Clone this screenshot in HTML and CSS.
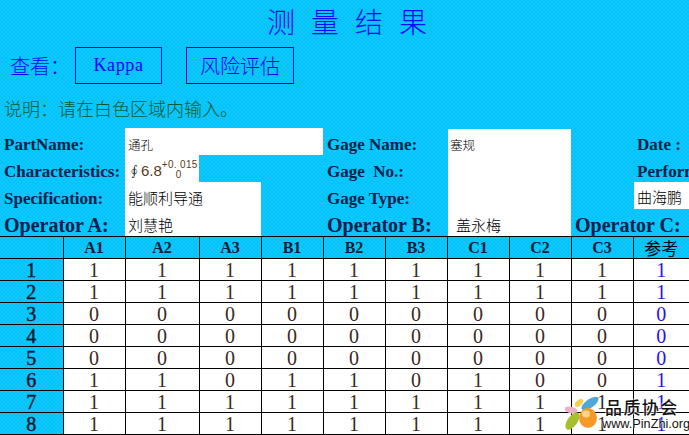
FILE: index.html
```html
<!DOCTYPE html>
<html lang="zh">
<head>
<meta charset="utf-8">
<title>测量结果</title>
<link rel="stylesheet" href="styles.css">
</head>
<body>
<div class="page">
  <h1 class="title">测量结果</h1>
  <div class="nav">
    <span class="nav-label">查看&#65306;</span>
    <a class="nav-btn kappa">Kappa</a>
    <a class="nav-btn risk">风险评估</a>
  </div>
  <p class="note">说明&#65306;请在白色区域内输入。</p>
  <div class="form">
    <div class="lbl">PartName:</div>
    <div class="val w-part">通孔</div>
    <div class="lbl gage-lbl">Gage Name:</div>
    <div class="gage-vals">
      <div class="val-small">塞规</div>
      <div></div>
      <div></div>
      <div class="val-op">盖永梅</div>
    </div>
    <div class="lbl date-lbl">Date :</div>

    <div class="lbl">Characteristics:</div>
    <div class="val w-char"><span class="phi">∮</span><span class="num">6.8</span><span class="tol"><sup>+0. 015</sup><sub>0</sub></span></div>
    <div class="lbl gage-lbl">Gage&nbsp; No.:</div>
    <div class="lbl date-lbl">Perform</div>

    <div class="lbl">Specification:</div>
    <div class="val w-spec">能顺利导通</div>
    <div class="lbl gage-lbl">Gage Type:</div>
    <div class="val w-perf">曲海鹏</div>

    <div class="lbl op">Operator A:</div>
    <div class="val w-spec">刘慧艳</div>
    <div class="lbl op gage-lbl">Operator B:</div>
    <div class="lbl op op-c">Operator C:</div>
  </div>
  <table class="grid">
    <colgroup><col class="c0"><col class="c1"><col class="c2"><col class="c1"><col class="c1"><col class="c1"><col class="c1"><col class="c1"><col class="c1"><col class="c1"><col class="c3"></colgroup>
    <thead>
      <tr><th></th><th>A1</th><th>A2</th><th>A3</th><th>B1</th><th>B2</th><th>B3</th><th>C1</th><th>C2</th><th>C3</th><th class="ref-h">参考</th></tr>
    </thead>
    <tbody>
      <tr><th>1</th><td>1</td><td>1</td><td>1</td><td>1</td><td>1</td><td>1</td><td>1</td><td>1</td><td>1</td><td class="ref">1</td></tr>
      <tr><th>2</th><td>1</td><td>1</td><td>1</td><td>1</td><td>1</td><td>1</td><td>1</td><td>1</td><td>1</td><td class="ref">1</td></tr>
      <tr><th>3</th><td>0</td><td>0</td><td>0</td><td>0</td><td>0</td><td>0</td><td>0</td><td>0</td><td>0</td><td class="ref">0</td></tr>
      <tr><th>4</th><td>0</td><td>0</td><td>0</td><td>0</td><td>0</td><td>0</td><td>0</td><td>0</td><td>0</td><td class="ref">0</td></tr>
      <tr><th>5</th><td>0</td><td>0</td><td>0</td><td>0</td><td>0</td><td>0</td><td>0</td><td>0</td><td>0</td><td class="ref">0</td></tr>
      <tr><th>6</th><td>1</td><td>1</td><td>0</td><td>1</td><td>1</td><td>0</td><td>1</td><td>0</td><td>0</td><td class="ref">1</td></tr>
      <tr><th>7</th><td>1</td><td>1</td><td>1</td><td>1</td><td>1</td><td>1</td><td>1</td><td>1</td><td>1</td><td class="ref">1</td></tr>
      <tr><th>8</th><td>1</td><td>1</td><td>1</td><td>1</td><td>1</td><td>1</td><td>1</td><td>1</td><td>1</td><td class="ref">1</td></tr>
    </tbody>
  </table>
  <div class="logo">
    <svg class="logo-mark" width="37" height="34" viewBox="0 0 37 34">
      <ellipse cx="25" cy="6.5" rx="10" ry="4.2" transform="rotate(-35 25 6.5)" fill="#4fa9d8"/>
      <ellipse cx="14" cy="6" rx="5" ry="3" transform="rotate(-40 14 6)" fill="#f2d24a"/>
      <ellipse cx="6" cy="13" rx="6.5" ry="3.4" transform="rotate(10 6 13)" fill="#eeb0c8"/>
      <ellipse cx="23" cy="21" rx="9" ry="10" fill="#f59a28"/>
      <ellipse cx="21" cy="17" rx="4" ry="3.5" fill="#fbd58a"/>
      <ellipse cx="7.5" cy="24" rx="10" ry="5" transform="rotate(-55 7.5 24)" fill="#a6bf2c"/>
    </svg>
    <div class="logo-text">
      <div class="logo-cn">品质协会</div>
      <div class="logo-url">www.PinZhi.org</div>
    </div>
  </div>
</div>
</body>
</html>
```
FILE: styles.css
```css
html, body {
  margin: 0;
  padding: 0;
  width: 689px;
  height: 435px;
  overflow: hidden;
}
.page {
  position: relative;
  width: 689px;
  height: 435px;
  overflow: hidden;
  background-color: #06ccff;
  background-image:
    radial-gradient(circle, #12b6f2 0.6px, transparent 0.9px),
    radial-gradient(circle, #12b6f2 0.6px, transparent 0.9px);
  background-size: 4px 4px;
  background-position: 0 0, 2px 2px;
  font-family: "Liberation Serif", "Noto Sans CJK SC", serif;
  text-spacing-trim: space-all;
}
.title {
  margin: 0;
  height: 42px;
  line-height: 42px;
  padding-left: 267px;
  font-size: 28px;
  letter-spacing: 16px;
  color: #0a0aff;
  font-family: "Noto Sans CJK SC", sans-serif;
  font-weight: 300;
}
.nav {
  display: flex;
  align-items: center;
  height: 36px;
  margin-top: 5px;
  padding-left: 10px;
  color: #0000ff;
  font-size: 20px;
}
.nav-label {
  width: 65px;
  font-family: "Noto Sans CJK SC", sans-serif;
  font-weight: 300;
}
.nav-btn {
  box-sizing: border-box;
  height: 37px;
  border: 1px solid #0000e0;
  display: flex;
  align-items: center;
  justify-content: center;
}
.kappa { width: 87px; margin-right: 24px; font-size: 18px; letter-spacing: 0.6px; }
.risk { width: 108px; font-family: "Noto Sans CJK SC", sans-serif; font-weight: 300; }
.note {
  margin: 13px 0 8px;
  padding-left: 4px;
  height: 24px;
  line-height: 24px;
  font-size: 18px;
  color: #005a2c;
  font-family: "Noto Sans CJK SC", sans-serif;
  font-weight: 300;
}
.form {
  display: grid;
  grid-template-columns: 125px 74px 62px 62px 124px 124px 62px 56px;
  grid-template-rows: repeat(4, 27px);
  height: 108px;
  white-space: nowrap;
  color: #00204a;
}
.lbl {
  grid-column: 1;
  padding-left: 4px;
  font-size: 17px;
  font-weight: bold;
  line-height: 33px;
}
.gage-lbl { grid-column: 5; }
.date-lbl { grid-column: 8; }
.op { font-size: 20px; line-height: 33px; }
.op-c { grid-column: 7; grid-row: 4; }
.val, .val-small, .val-op {
  background: #fff;
  color: #000;
  font-family: "Noto Sans CJK SC", sans-serif;
  font-weight: 300;
  font-size: 15px;
  line-height: 31px;
  padding-left: 3px;
}
.w-part { grid-column: 2 / 5; font-size: 12.5px; line-height: 34px; }
.w-char {
  grid-column: 2;
  display: flex;
  align-items: center;
  padding: 4px 0 0 5px;
  line-height: 1;
}
.phi { color: #111; font-size: 14px; margin-right: 2px; font-family: "DejaVu Sans", serif; }
.num { color: #5a3a20; font-size: 15px; font-family: "Liberation Sans", sans-serif; }
.tol {
  position: relative;
  width: 34px;
  height: 27px;
  color: #5a3a20;
  font-family: "Liberation Sans", sans-serif;
}
.tol sup { position: absolute; left: 0; top: 3px; font-size: 10px; line-height: 1; vertical-align: baseline; white-space: nowrap; letter-spacing: 0.3px; }
.tol sub { position: absolute; left: 14px; top: 13px; font-size: 10px; line-height: 1; vertical-align: baseline; }
.w-spec { grid-column: 2 / 4; }
.w-perf { grid-column: 8; margin-left: 1px; padding-left: 3px; line-height: 29px; }
.gage-vals {
  grid-column: 6;
  grid-row: 1 / 5;
  display: grid;
  grid-template-rows: repeat(4, 27px);
  background: #fff;
  margin: 1px 0 0 1px;
}
.val-small { font-size: 12.5px; background: none; padding-left: 2px; line-height: 32px; }
.val-op { background: none; padding-left: 8px; line-height: 30px; }
.grid {
  border-collapse: collapse;
  table-layout: fixed;
  width: 689px;
  margin: 0;
}
.c0 { width: 63px; }
.c1 { width: 62px; }
.c2 { width: 74px; }
.c3 { width: 56px; }
.grid th, .grid td {
  box-sizing: border-box;
  height: 22px;
  padding: 0;
  border: 1px solid #000;
  text-align: center;
  line-height: 1;
}
.grid tr > :first-child { border-left: none; }
.grid tr > :last-child { border-right: none; }
.grid thead th {
  font-size: 16px;
  font-weight: bold;
  color: #001a33;
}
.grid thead .ref-h { font-family: "Noto Sans CJK SC", sans-serif; font-weight: 400; font-size: 17px; color: #000; }
.grid tbody th {
  font-size: 20px;
  font-weight: normal;
  color: #001428;
  -webkit-text-stroke: 0.4px #001428;
}
.grid td {
  background: #fff;
  font-size: 20px;
  color: #3a2a22;
}
.grid td.ref { color: #2a10f0; }
.logo {
  position: absolute;
  left: 565px;
  top: 397px;
  display: flex;
}
.logo-mark { flex: none; }
.logo-text { color: #111; white-space: nowrap; }
.logo-cn {
  font-family: "Noto Sans CJK SC", sans-serif;
  font-size: 17px;
  line-height: 20px;
  letter-spacing: 1.4px;
  padding-left: 3px;
  font-weight: 500;
  text-shadow: 0 0 2px #fff, 0 0 2px #fff;
}
.logo-url {
  font-family: "Liberation Sans", sans-serif;
  font-size: 12.7px;
  line-height: 15px;
  text-shadow: 0 0 2px #fff, 0 0 2px #fff;
}
```
